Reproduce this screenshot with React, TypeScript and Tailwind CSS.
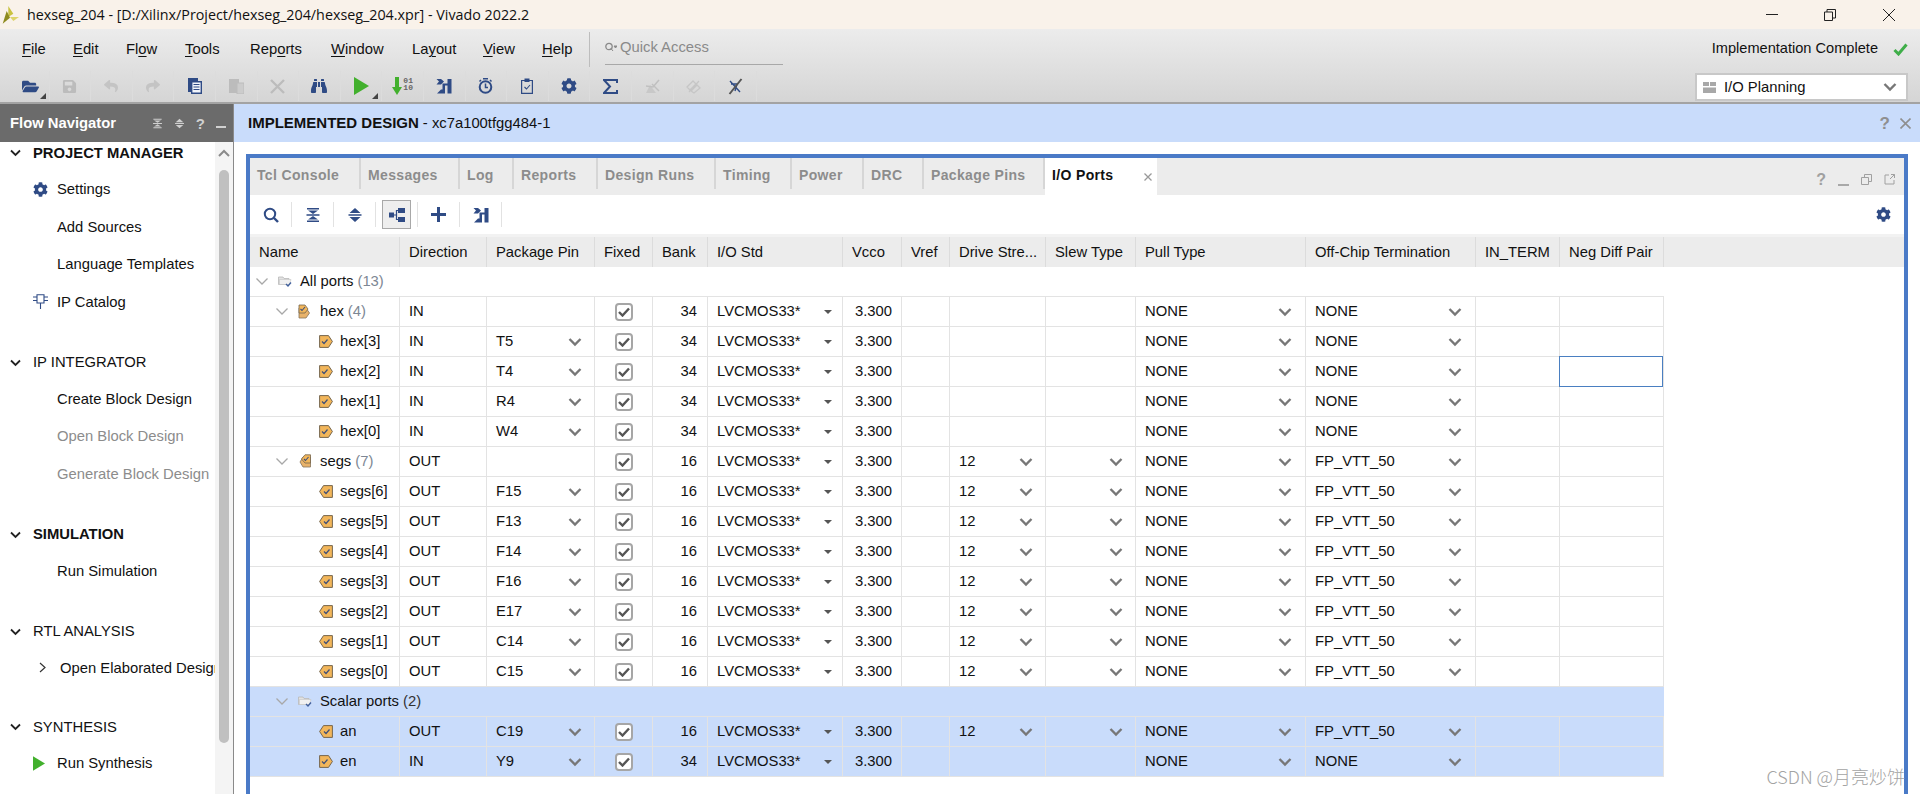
import type { ReactNode } from "react"
import { FaBinoculars, FaCog, FaFolderOpen, FaReply, FaSave, FaShare } from "react-icons/fa"

const BLUE = "#2f4b85"
const COLS = "grid grid-cols-[150px_87px_108px_58px_55px_135px_59px_48px_96px_90px_170px_170px_84px_104px]"

/* ---------- small drawings ---------- */

function Chevron({ color = "#777777", className = "" }: { color?: string; className?: string }) {
  return (
    <svg width="14" height="10" viewBox="0 0 14 10" className={className}>
      <path d="M1.5 2 L7 7.5 L12.5 2" fill="none" stroke={color} strokeWidth="2.4" />
    </svg>
  )
}

function ThinChevron() {
  return (
    <svg width="14" height="9" viewBox="0 0 14 9">
      <path d="M1.5 1.5 L7 7 L12.5 1.5" fill="none" stroke="#a8a8a8" strokeWidth="1.3" />
    </svg>
  )
}

function NavChevron() {
  return (
    <svg width="11" height="8" viewBox="0 0 11 8">
      <path d="M1 1.5 L5.5 6 L10 1.5" fill="none" stroke="#222222" strokeWidth="1.8" />
    </svg>
  )
}

function Caret() {
  return <span className="h-0 w-0 border-x-[4px] border-t-[4px] border-x-transparent border-t-[#555555]" />
}

function CornerCaret() {
  return <span className="absolute bottom-[2px] right-[3px] h-0 w-0 border-b-[6px] border-l-[6px] border-b-[#444444] border-l-transparent" />
}

function CheckBox() {
  return (
    <span className="flex h-[18px] w-[18px] items-center justify-center rounded-[4px] border-2 border-[#a6a6a6] bg-white">
      <svg width="12" height="10" viewBox="0 0 12 10">
        <path d="M1 5 L4.5 8.5 L11 1.5" fill="none" stroke="#555555" strokeWidth="2.4" />
      </svg>
    </span>
  )
}

function PortIcon({ out }: { out?: boolean }) {
  return (
    <svg width="14" height="13" viewBox="0 0 14 13">
      <path
        d={out ? "M4.5 .6 H13.4 V12.4 H4.5 L.6 6.5 Z" : "M.6 .6 H9.5 L13.4 6.5 L9.5 12.4 H.6 Z"}
        fill="#f2b65a"
        stroke="#75664f"
        strokeWidth="1"
      />
      <path d={out ? "M5 6.5 L7 8.5 L10.5 4.5" : "M3 6.5 L5 8.5 L8.5 4.5"} fill="none" stroke="#3f4f78" strokeWidth="1.2" />
    </svg>
  )
}

function BusIcon({ out }: { out?: boolean }) {
  return (
    <svg width="13" height="15" viewBox="0 0 13 15">
      <path d={out ? "M5 3 H12.5 V13 H5 L2 8 Z" : "M1 4 H8 L11.5 9 L8 14 H1 Z"} fill="#e8b26a" stroke="#85745a" strokeWidth=".8" />
      <path d={out ? "M7 .8 H12.5 V9 H7 L3.5 5 Z" : "M1 1 H7 L10 5 L7 9 H1 Z"} fill="#f2b65a" stroke="#75664f" strokeWidth=".8" />
      <path d={out ? "M6 5 L7.5 6.5 L10.5 3" : "M2.5 5 L4 6.5 L7 3"} fill="none" stroke="#3f4f78" strokeWidth="1.1" />
    </svg>
  )
}

function FolderIcon() {
  return (
    <svg width="14" height="13" viewBox="0 0 14 13">
      <path d="M.5 2 H5 L6 3.5 H11 V9.5 H.5 Z" fill="#e2e2e2" stroke="#b9b9b9" strokeWidth=".8" />
      <path d="M1.5 4.5 H13 L11.5 9.5 H1.5 Z" fill="#f1f1f1" stroke="#c4c4c4" strokeWidth=".6" />
      <path d="M8 9 L10 11 L13 7.5" fill="none" stroke="#3f5f9c" strokeWidth="1.3" />
    </svg>
  )
}

function CollapseIcon({ color = BLUE, size = 16 }: { color?: string; size?: number }) {
  return (
    <svg width={size} height={size} viewBox="0 0 16 16">
      <path d="M2 1 H14 V2.5 H2 Z M3 3.5 H13 L8 7 Z M1.5 7.3 H14.5 V8.7 H1.5 Z M8 9 L13 12.5 H3 Z M2 13.5 H14 V15 H2 Z" fill={color} />
    </svg>
  )
}

function ExpandIcon({ color = BLUE, size = 16 }: { color?: string; size?: number }) {
  return (
    <svg width={size} height={size} viewBox="0 0 16 16">
      <path d="M8 1 L13.5 6 H2.5 Z M1.5 7.2 H14.5 V8.8 H1.5 Z M2.5 10 H13.5 L8 15 Z" fill={color} />
    </svg>
  )
}

function GroupIcon() {
  return (
    <svg width="16" height="14" viewBox="0 0 16 14">
      <path d="M0 4.5 H5 V9.5 H0 Z M9 0 H16 V5 H9 Z M9 9 H16 V14 H9 Z" fill={BLUE} />
      <path d="M5 7 H7.5 V2.5 H9 M7.5 7 V11.5 H9" fill="none" stroke={BLUE} strokeWidth="1.2" />
    </svg>
  )
}

// the routed-design glyph: a flag on the left joined to a bar on the right, with a step underneath
function FlowIcon({ size = 16 }: { size?: number }) {
  return (
    <svg width={size} height={size} viewBox="0 0 16 16">
      <path d="M11.5 1 H15.5 V15.5 H11.5 V7.5 H9 V15.5 H1 L5 11.5 H6.5 V5.5 H11.5 Z" fill={BLUE} />
      <path d="M.5 1 H5 L8 3.5 L5 6.5 H.5 L3 3.5 Z" fill={BLUE} />
    </svg>
  )
}

function PlusIcon() {
  return (
    <svg width="15" height="15" viewBox="0 0 15 15">
      <path d="M6 0 H9 V6 H15 V9 H9 V15 H6 V9 H0 V6 H6 Z" fill={BLUE} />
    </svg>
  )
}

function SearchIcon() {
  return (
    <svg width="16" height="16" viewBox="0 0 16 16">
      <circle cx="7" cy="7" r="5.2" fill="none" stroke={BLUE} strokeWidth="2" />
      <path d="M11 11 L15 15" stroke={BLUE} strokeWidth="2.4" />
    </svg>
  )
}

function DocIcon() {
  return (
    <svg width="14" height="16" viewBox="0 0 14 16">
      <path d="M0 0 H10 V3 H3 V14 H0 Z" fill={BLUE} />
      <path d="M3.7 3.7 H13.3 V15.3 H3.7 Z" fill="#f1f4fa" stroke={BLUE} strokeWidth="1.4" />
      <path d="M5.5 6.5 H11.5 M5.5 9 H11.5 M5.5 11.5 H11.5" stroke={BLUE} strokeWidth="1.2" />
    </svg>
  )
}

function PasteIcon() {
  return (
    <svg width="15" height="16" viewBox="0 0 15 16">
      <path d="M0 1 H10 V15 H0 Z" fill="#bcbcbc" />
      <path d="M8 5 H15 V16 H8 Z" fill="#cccccc" stroke="#bcbcbc" />
    </svg>
  )
}

function CrossIcon() {
  return (
    <svg width="15" height="15" viewBox="0 0 15 15">
      <path d="M1 1 L14 14 M14 1 L1 14" stroke="#bcbcbc" strokeWidth="2.4" />
    </svg>
  )
}

function PlayIcon({ size = 15 }: { size?: number }) {
  return (
    <svg width={size} height={size + 3} viewBox="0 0 15 18">
      <path d="M0 0 L15 9 L0 18 Z" fill="#42b02d" />
    </svg>
  )
}

function BitstreamIcon() {
  return (
    <div className="flex items-start">
      <svg width="10" height="18" viewBox="0 0 10 18">
        <path d="M3 0 H7 V10 H10 L5 18 L0 10 H3 Z" fill="#42b02d" />
      </svg>
      <span className="ml-[1px] font-['Liberation_Mono',monospace] text-[8px] leading-[7px] font-bold text-[#666666]">
        01
        <br />
        10
      </span>
    </div>
  )
}

function TimerIcon() {
  return (
    <svg width="15" height="16" viewBox="0 0 15 16">
      <circle cx="7.5" cy="9" r="5.8" fill="none" stroke={BLUE} strokeWidth="2" />
      <path d="M5 .8 H10 M7.5 5.5 V9.5 H10 M1.5 3.5 L3 2 M13.5 3.5 L12 2" fill="none" stroke={BLUE} strokeWidth="1.5" />
    </svg>
  )
}

function ClipboardIcon() {
  return (
    <svg width="12" height="16" viewBox="0 0 12 16">
      <path d="M.6 2.5 H11.4 V15.4 H.6 Z" fill="none" stroke={BLUE} strokeWidth="1.2" />
      <path d="M3.5 .5 H8.5 V4 H3.5 Z" fill={BLUE} />
      <path d="M3.5 9 L5.5 11 L9 7" fill="none" stroke={BLUE} strokeWidth="1.1" />
    </svg>
  )
}

function SigmaIcon() {
  return (
    <svg width="15" height="15" viewBox="0 0 15 15">
      <path d="M14 4 V1 H1 L7 7.5 L1 14 H14 V11" fill="none" stroke={BLUE} strokeWidth="2" />
    </svg>
  )
}

function GrayMarkIcon() {
  return (
    <svg width="15" height="15" viewBox="0 0 15 15">
      <path d="M1 14 L5 6 L11 14 Z" fill="#c8c8c8" />
      <path d="M1 7 L8 8 L14 1" fill="none" stroke="#c0c0c0" strokeWidth="1.6" />
      <path d="M7 5 L14 12" stroke="#c0c0c0" strokeWidth="1.4" />
    </svg>
  )
}

function GrayLinkIcon() {
  return (
    <svg width="15" height="15" viewBox="0 0 15 15">
      <path d="M1 8 L7 2 L10 5 L4 11 Z M5 12 L11 6 L14 9 L8 14 Z" fill="none" stroke="#c6c6c6" strokeWidth="1.3" />
      <path d="M3 13 L13 2" stroke="#c6c6c6" strokeWidth="1.2" />
    </svg>
  )
}

function CrossPenIcon() {
  return (
    <svg width="15" height="17" viewBox="0 0 15 17">
      <path d="M2 3 L12 14 M3 6 H9 L7 13" fill="none" stroke={BLUE} strokeWidth="1.4" />
      <path d="M1.5 16 L13.5 1" stroke="#555555" strokeWidth="2" />
    </svg>
  )
}

function Logo() {
  return (
    <svg width="17" height="18" viewBox="0 0 17 18">
      <path d="M6.3 0 L11.3 7.7 L6.3 11 Z" fill="#c9c23f" />
      <path d="M8 11 L17 11 L11.3 15 Z" fill="#ddd46a" />
      <path d="M4.7 5 L8 11.7 L.7 17.7 Z" fill="#8d8a1e" />
    </svg>
  )
}

function IpIcon() {
  return (
    <svg width="15" height="15" viewBox="0 0 15 15">
      <path d="M4 .7 H11 V9 H4 Z M0 3 H4 M0 6.5 H4 M11 3 H15 M11 6.5 H15 M7.5 9 V15" fill="none" stroke={BLUE} strokeWidth="1.1" />
    </svg>
  )
}

/* ---------- top of the window ---------- */

const MENUS: { before: string; key: string; after: string; w: string }[] = [
  { before: "", key: "F", after: "ile", w: "w-[51px]" },
  { before: "", key: "E", after: "dit", w: "w-[53px]" },
  { before: "Fl", key: "o", after: "w", w: "w-[59px]" },
  { before: "", key: "T", after: "ools", w: "w-[65px]" },
  { before: "Rep", key: "o", after: "rts", w: "w-[81px]" },
  { before: "", key: "W", after: "indow", w: "w-[81px]" },
  { before: "La", key: "y", after: "out", w: "w-[71px]" },
  { before: "", key: "V", after: "iew", w: "w-[59px]" },
  { before: "", key: "H", after: "elp", w: "w-[48px]" },
]

function TitleBar() {
  return (
    <div className="flex h-[29px] shrink-0 items-center bg-[#f9f2ea] pl-[2px] font-['Open_Sans',sans-serif] text-[14.3px] text-[#111111]">
      <Logo />
      <span className="ml-[8px]">hexseg_204 - [D:/Xilinx/Project/hexseg_204/hexseg_204.xpr] - Vivado 2022.2</span>
      <div className="ml-auto flex items-center pr-[25px]">
        <span className="h-[1px] w-[12px] bg-[#222222]" />
        <svg width="12" height="12" viewBox="0 0 12 12" className="ml-[46px]">
          <path d="M.5 3 H8.5 V11.5 H.5 Z M3 3 V.5 H11.5 V9 H8.5" fill="none" stroke="#222222" strokeWidth="1" />
        </svg>
        <svg width="12" height="12" viewBox="0 0 12 12" className="ml-[47px]">
          <path d="M0 0 L12 12 M12 0 L0 12" stroke="#222222" strokeWidth="1" />
        </svg>
      </div>
    </div>
  )
}

const TOOLS: { icon: ReactNode; caret?: boolean }[] = [
  { icon: <FaFolderOpen size={17} color={BLUE} className="ml-[5px]" />, caret: true },
  { icon: <FaSave size={15} color="#bcbcbc" /> },
  { icon: <FaReply size={14} color="#c4c4c4" /> },
  { icon: <FaShare size={14} color="#c4c4c4" /> },
  { icon: <DocIcon /> },
  { icon: <PasteIcon /> },
  { icon: <CrossIcon /> },
  { icon: <FaBinoculars size={16} color={BLUE} /> },
  { icon: <PlayIcon />, caret: true },
  { icon: <BitstreamIcon /> },
  { icon: <FlowIcon /> },
  { icon: <TimerIcon /> },
  { icon: <ClipboardIcon /> },
  { icon: <FaCog size={16} color={BLUE} /> },
  { icon: <SigmaIcon /> },
  { icon: <GrayMarkIcon /> },
  { icon: <GrayLinkIcon /> },
  { icon: <CrossPenIcon /> },
]

function MenuArea() {
  return (
    <div className="flex h-[75px] shrink-0 border-b-2 border-[#a3a3a3] bg-gradient-to-b from-[#ececec] to-[#d5d5d5]">
      <div className="flex flex-1 flex-col">
        <div className="flex h-[41px] items-center pl-[22px]">
          {MENUS.map((m) => (
            <span key={m.key + m.after} className={m.w}>
              {m.before}
              <span className="underline underline-offset-2">{m.key}</span>
              {m.after}
            </span>
          ))}
          <div className="ml-[-1px] h-[35px] w-[1px] bg-[#bdbdbd]" />
          <div className="ml-[15px] flex h-[31px] w-[178px] items-center gap-[3px] border-b border-[#a8a8a8] pb-[4px] text-[#8a8a8a]">
            <svg width="12" height="10" viewBox="0 0 12 10">
              <circle cx="4" cy="4.5" r="3.2" fill="none" stroke="#8a8a8a" strokeWidth="1.3" />
              <path d="M6 6.5 L8 9 M9 4 H12 L10.5 6 Z" fill="#8a8a8a" stroke="#8a8a8a" strokeWidth="1" />
            </svg>
            Quick Access
          </div>
        </div>
        <div className="flex h-[32px] items-center pl-[8px]">
          {TOOLS.map((t, i) => (
            <div key={i} className="relative flex h-[30px] w-[41.6px] items-center justify-center border-r border-[#dcdcdc]">
              {t.icon}
              {t.caret && <CornerCaret />}
            </div>
          ))}
        </div>
      </div>
      <div className="flex w-[225px] flex-col items-end pr-[12px]">
        <div className="flex h-[40px] items-center gap-[15px]">
          <span className="text-[14.6px]">Implementation Complete</span>
          <svg width="15" height="13" viewBox="0 0 15 13">
            <path d="M1.5 7 L5.5 11 L13.5 1.5" fill="none" stroke="#3fae49" strokeWidth="3" />
          </svg>
        </div>
        <div className="mt-[4px] flex h-[28px] w-[213px] items-center border-2 border-[#c8c8c8] bg-white pl-[6px] pr-[9px]">
          <svg width="13" height="11" viewBox="0 0 13 11">
            <path d="M0 0 H6 V4 H0 Z M7 0 H13 V4 H7 Z M0 5.5 H13 V11 H0 Z" fill="#a8a8a8" />
          </svg>
          <span className="ml-[8px]">I/O Planning</span>
          <Chevron className="ml-auto" />
        </div>
      </div>
    </div>
  )
}

/* ---------- flow navigator ---------- */

type NavItem = { label: string; icon?: ReactNode; gray?: boolean; arrow?: boolean }
type NavGroup = { title: string; bold?: boolean; items: NavItem[] }

const NAV: NavGroup[] = [
  {
    title: "PROJECT MANAGER",
    bold: true,
    items: [
      { label: "Settings", icon: <FaCog size={15} color={BLUE} /> },
      { label: "Add Sources" },
      { label: "Language Templates" },
      { label: "IP Catalog", icon: <IpIcon /> },
    ],
  },
  {
    title: "IP INTEGRATOR",
    items: [{ label: "Create Block Design" }, { label: "Open Block Design", gray: true }, { label: "Generate Block Design", gray: true }],
  },
  { title: "SIMULATION", bold: true, items: [{ label: "Run Simulation" }] },
  { title: "RTL ANALYSIS", items: [{ label: "Open Elaborated Design", arrow: true }] },
  { title: "SYNTHESIS", items: [{ label: "Run Synthesis", icon: <PlayIcon size={12} /> }] },
]

function FlowNavigator() {
  return (
    <aside className="flex w-[234px] shrink-0 flex-col overflow-hidden border-r border-[#8a8a8a]">
      <div className="flex h-[38px] shrink-0 items-center bg-[#6b6b6b] pl-[10px] font-bold text-white">
        <span>Flow Navigator</span>
        <div className="ml-auto flex items-center gap-[11px] pr-[7px]">
          <CollapseIcon color="#cfcfcf" size={11} />
          <ExpandIcon color="#cfcfcf" size={11} />
          <span className="text-[15px] leading-none text-[#d0d0d0]">?</span>
          <span className="mt-[8px] h-[2px] w-[10px] bg-[#d0d0d0]" />
        </div>
      </div>
      <div className="flex min-h-0 flex-1">
        <div className="min-w-0 flex-1 overflow-hidden">
          {NAV.map((g, i) => (
            <div key={g.title} className={i === 0 ? "" : i === 4 ? "mt-[29.5px]" : "mt-[31px]"}>
              <div className="flex h-[22px] items-center">
                <span className="ml-[10px] w-[23px]">
                  <NavChevron />
                </span>
                <span className={g.bold ? "font-bold" : ""}>{g.title}</span>
              </div>
              <div className="mt-[6.5px]">
                {g.items.map((item) => (
                  <div key={item.label} className={`flex h-[37.5px] items-center whitespace-nowrap ${item.gray ? "text-[#8c8c8c]" : ""}`}>
                    {item.arrow ? (
                      <>
                        <svg width="7" height="11" viewBox="0 0 7 11" className="ml-[39px] mr-[14px] shrink-0">
                          <path d="M1 1 L6 5.5 L1 10" fill="none" stroke="#333333" strokeWidth="1.2" />
                        </svg>
                        {item.label}
                      </>
                    ) : (
                      <>
                        <span className="ml-[33px] flex w-[24px] items-center">{item.icon}</span>
                        {item.label}
                      </>
                    )}
                  </div>
                ))}
              </div>
            </div>
          ))}
        </div>
        <div className="flex w-[18px] shrink-0 flex-col items-center bg-[#f4f4f4]">
          <svg width="12" height="8" viewBox="0 0 12 8" className="mt-[7px]">
            <path d="M1 7 L6 2 L11 7" fill="none" stroke="#8a8a8a" strokeWidth="2" />
          </svg>
          <div className="mt-[13px] h-[573px] w-[10px] rounded-[5px] bg-[#c0c0c0]" />
        </div>
      </div>
    </aside>
  )
}

/* ---------- ports table ---------- */

type PortRow = {
  name: string
  count?: number
  level: 0 | 1 | 2
  group?: boolean
  out?: boolean
  pin?: string
  bank?: string
  selected?: boolean
}

const ROWS: PortRow[] = [
  { name: "All ports", count: 13, level: 0, group: true },
  { name: "hex", count: 4, level: 1, bank: "34" },
  { name: "hex[3]", level: 2, pin: "T5", bank: "34" },
  { name: "hex[2]", level: 2, pin: "T4", bank: "34" },
  { name: "hex[1]", level: 2, pin: "R4", bank: "34" },
  { name: "hex[0]", level: 2, pin: "W4", bank: "34" },
  { name: "segs", count: 7, level: 1, out: true, bank: "16" },
  { name: "segs[6]", level: 2, out: true, pin: "F15", bank: "16" },
  { name: "segs[5]", level: 2, out: true, pin: "F13", bank: "16" },
  { name: "segs[4]", level: 2, out: true, pin: "F14", bank: "16" },
  { name: "segs[3]", level: 2, out: true, pin: "F16", bank: "16" },
  { name: "segs[2]", level: 2, out: true, pin: "E17", bank: "16" },
  { name: "segs[1]", level: 2, out: true, pin: "C14", bank: "16" },
  { name: "segs[0]", level: 2, out: true, pin: "C15", bank: "16" },
  { name: "Scalar ports", count: 2, level: 1, group: true, selected: true },
  { name: "an", level: 2, out: true, pin: "C19", bank: "16", selected: true },
  { name: "en", level: 2, pin: "Y9", bank: "34", selected: true },
]

const HEADERS = [
  "Name",
  "Direction",
  "Package Pin",
  "Fixed",
  "Bank",
  "I/O Std",
  "Vcco",
  "Vref",
  "Drive Stre...",
  "Slew Type",
  "Pull Type",
  "Off-Chip Termination",
  "IN_TERM",
  "Neg Diff Pair",
]

function Cell({ children, className = "pl-[9px]" }: { children?: ReactNode; className?: string }) {
  return <div className={`flex min-w-0 items-center border-r border-[#e3e3e3] ${className}`}>{children}</div>
}

function NameCell({ row }: { row: PortRow }) {
  const indent = row.level === 0 ? "pl-[5px]" : row.level === 1 ? "pl-[25px]" : "pl-[69px]"
  return (
    <div className={`flex items-center whitespace-nowrap ${indent} ${row.group ? "" : "border-r border-[#e3e3e3]"}`}>
      {row.level < 2 && <ThinChevron />}
      <span className={`flex items-center ${row.level < 2 ? "ml-[9px] w-[22px]" : "mr-[7px]"}`}>
        {row.group ? <FolderIcon /> : row.level === 1 ? <BusIcon out={row.out} /> : <PortIcon out={row.out} />}
      </span>
      <span>{row.name}</span>
      {row.count !== undefined && <span className={`ml-[4px] ${row.selected ? "text-[#333333]" : "text-[#7d8794]"}`}>({row.count})</span>}
    </div>
  )
}

function TableRow({ row, cursor }: { row: PortRow; cursor?: boolean }) {
  const bg = row.selected ? "bg-[#c9dcfb]" : "bg-white"
  if (row.group) {
    return (
      <div className={`${COLS} h-[30px] border-b border-[#e3e3e3] ${bg}`}>
        <div className="col-span-14 flex">
          <NameCell row={row} />
        </div>
      </div>
    )
  }
  return (
    <div className={`${COLS} h-[30px] border-b border-[#e3e3e3] ${bg}`}>
      <NameCell row={row} />
      <Cell>{row.out ? "OUT" : "IN"}</Cell>
      <Cell className="justify-between pl-[9px] pr-[12px]">
        {row.pin}
        {row.pin && <Chevron />}
      </Cell>
      <Cell className="justify-center">
        <CheckBox />
      </Cell>
      <Cell className="justify-end pr-[10px]">{row.bank}</Cell>
      <Cell className="justify-between pl-[9px] pr-[10px]">
        LVCMOS33*
        <Caret />
      </Cell>
      <Cell className="justify-end pr-[9px]">3.300</Cell>
      <Cell />
      <Cell className="justify-between pl-[9px] pr-[12px]">
        {row.out && "12"}
        {row.out && <Chevron />}
      </Cell>
      <Cell className="justify-end pr-[12px]">{row.out && <Chevron />}</Cell>
      <Cell className="justify-between pl-[9px] pr-[13px]">
        NONE
        <Chevron />
      </Cell>
      <Cell className="justify-between pl-[9px] pr-[13px]">
        {row.out ? "FP_VTT_50" : "NONE"}
        <Chevron />
      </Cell>
      <Cell />
      <Cell className={cursor ? "relative" : ""}>
        {cursor && <div className="absolute -bottom-[1px] -left-[1px] -top-[1px] right-0 border border-[#4a7fc1] bg-white" />}
      </Cell>
    </div>
  )
}

function PortsTable() {
  return (
    <div className="min-h-0 flex-1 overflow-hidden bg-white">
      <div className="h-[3px] bg-[#f2f2f2]" />
      <div className={`${COLS} h-[30px] bg-[#ececec]`}>
        {HEADERS.map((h) => (
          <div key={h} className="flex items-center overflow-hidden whitespace-nowrap border-r border-[#dcdcdc] pl-[9px]">
            {h}
          </div>
        ))}
      </div>
      <div className="w-[1414px]">
        {ROWS.map((row) => (
          <TableRow key={row.name} row={row} cursor={row.name === "hex[2]"} />
        ))}
      </div>
    </div>
  )
}

/* ---------- bottom panel ---------- */

const TABS = [
  { label: "Tcl Console", w: "w-[111px]" },
  { label: "Messages", w: "w-[99px]" },
  { label: "Log", w: "w-[54px]" },
  { label: "Reports", w: "w-[84px]" },
  { label: "Design Runs", w: "w-[118px]" },
  { label: "Timing", w: "w-[76px]" },
  { label: "Power", w: "w-[72px]" },
  { label: "DRC", w: "w-[60px]" },
  { label: "Package Pins", w: "w-[121px]" },
]

const TABLE_TOOLS: { icon: ReactNode; active?: boolean }[] = [
  { icon: <SearchIcon /> },
  { icon: <CollapseIcon /> },
  { icon: <ExpandIcon /> },
  { icon: <GroupIcon />, active: true },
  { icon: <PlusIcon /> },
  { icon: <FlowIcon /> },
]

function PortsPanel() {
  return (
    <div className="mx-[12px] mt-[12px] flex min-h-0 flex-1 flex-col border-4 border-b-0 border-[#4a7ac7]">
      <div className="flex h-[37px] shrink-0 bg-[#ececec] text-[14px]">
        {TABS.map((t) => (
          <div key={t.label} className={`${t.w} h-[31px] border-r-2 border-[#d6d6d6] pl-[7px] pt-[7px] font-bold tracking-[0.35px] text-[#8c8c8c]`}>
            {t.label}
          </div>
        ))}
        <div className="flex w-[112px] items-start bg-white pl-[7px] pt-[7px] font-bold tracking-[0.35px]">
          I/O Ports
          <svg width="8" height="8" viewBox="0 0 8 8" className="ml-[30px] mt-[8px]">
            <path d="M.5 .5 L7.5 7.5 M7.5 .5 L.5 7.5" stroke="#999999" strokeWidth="1.3" />
          </svg>
        </div>
        <div className="ml-auto flex items-center gap-[12px] pr-[9px] pt-[6px] text-[#a0a0a0]">
          <span className="text-[16px] font-bold leading-none">?</span>
          <span className="mt-[10px] h-[2px] w-[11px] bg-[#a8a8a8]" />
          <svg width="11" height="11" viewBox="0 0 11 11">
            <path d="M.5 3.5 H7.5 V10.5 H.5 Z M3.5 3.5 V.5 H10.5 V7.5 H7.5" fill="none" stroke="#a0a0a0" />
          </svg>
          <svg width="11" height="11" viewBox="0 0 11 11">
            <path d="M5 1 H1 V10 H10 V6 M7 .5 H10.5 V4 M10.5 .5 L6 5" fill="none" stroke="#a0a0a0" />
          </svg>
        </div>
      </div>
      <div className="flex h-[39px] shrink-0 items-center bg-white">
        {TABLE_TOOLS.map((t, i) => (
          <div key={i} className="flex h-[25px] w-[42px] items-center justify-center border-r border-[#e2e2e2]">
            {t.active ? (
              <div className="flex h-[29px] w-[29px] items-center justify-center border border-[#a8a8a8] bg-[#eeeeee]">{t.icon}</div>
            ) : (
              t.icon
            )}
          </div>
        ))}
        <div className="ml-auto pr-[13px]">
          <FaCog size={15} color={BLUE} />
        </div>
      </div>
      <PortsTable />
    </div>
  )
}

export default function App() {
  return (
    <div className="relative flex h-screen w-full flex-col overflow-hidden bg-white font-['Liberation_Sans',sans-serif] text-[14.8px] text-[#111111]">
      <TitleBar />
      <MenuArea />
      <div className="flex min-h-0 flex-1">
        <FlowNavigator />
        <main className="flex min-w-0 flex-1 flex-col">
          <div className="flex h-[38px] shrink-0 items-center bg-[#c9dcfb] pl-[14px]">
            <span className="text-[15px] font-bold">IMPLEMENTED DESIGN</span>
            <span className="ml-[4px]">- xc7a100tfgg484-1</span>
            <div className="ml-auto flex items-center gap-[10px] pr-[9px] text-[#8f8f8f]">
              <span className="text-[17px] font-bold leading-none">?</span>
              <svg width="11" height="11" viewBox="0 0 11 11">
                <path d="M.5 .5 L10.5 10.5 M10.5 .5 L.5 10.5" stroke="#8f8f8f" strokeWidth="1.6" />
              </svg>
            </div>
          </div>
          <PortsPanel />
        </main>
      </div>
      <div className="absolute bottom-[8px] right-[15px] font-['Noto_Sans_CJK_SC',sans-serif] text-[18px] font-light leading-[20px] text-[#a3a3a3]">CSDN @月亮炒饼</div>
    </div>
  )
}
